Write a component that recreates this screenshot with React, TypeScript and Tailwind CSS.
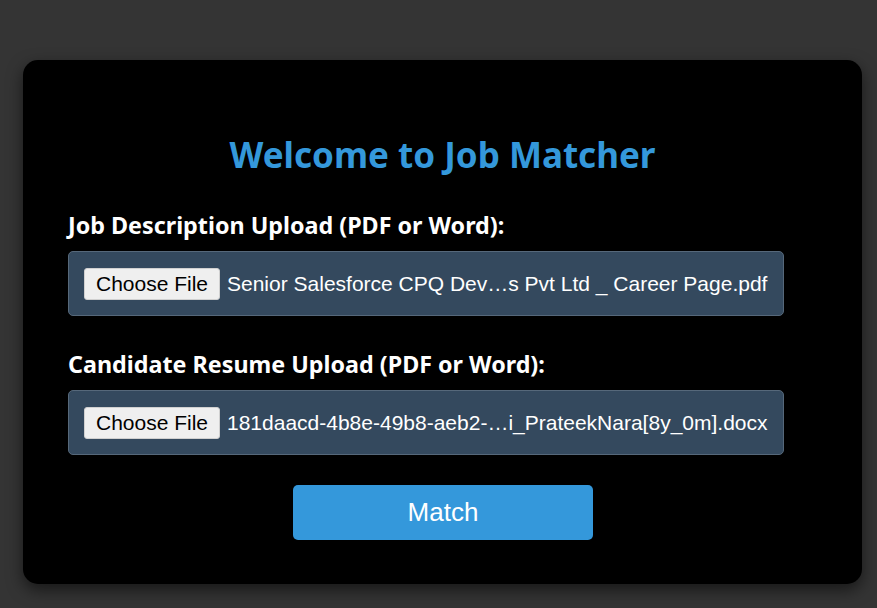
export default function App() {
  const uploads = [
    { label: 'Job Description Upload (PDF or Word):', file: 'Senior Salesforce CPQ Dev…s Pvt Ltd _ Career Page.pdf' },
    { label: 'Candidate Resume Upload (PDF or Word):', file: '181daacd-4b8e-49b8-aeb2-…i_PrateekNara[8y_0m].docx' },
  ];

  return (
    <div className="min-h-screen w-full bg-[#343434] pt-[60px] pl-[23px] font-['Noto_Sans',sans-serif]">
      <div className="w-[839px] h-[524px] bg-black rounded-[15px] shadow-[0_6px_16px_rgba(0,0,0,0.55)] pt-[73px] pl-[45px] flex flex-col">
        <h1 className="w-[749px] text-center text-[35px] leading-[44px] font-bold text-[#3498db]">
          Welcome to Job Matcher
        </h1>

        {uploads.map((u, i) => (
          <div key={i} className={i === 0 ? 'mt-[33px]' : 'mt-[33px]'}>
            <label className="block text-white font-bold text-[23.3px] leading-[30px]">
              {u.label}
            </label>
            <div className="mt-[11px] w-[716px] h-[65px] bg-[#34495e] border border-[#56687a] rounded-[5px] flex items-center pl-[15px] font-['Liberation_Sans',Arial,sans-serif]">
              <span className="h-[32px] w-[136px] flex items-center justify-center bg-[#efefef] border border-[#d0d0d0] rounded-[3px] text-black text-[21px]">
                Choose File
              </span>
              <span className="ml-[7px] text-white text-[21px] whitespace-nowrap">{u.file}</span>
            </div>
          </div>
        ))}

        <button className="mt-[30px] ml-[225px] w-[300px] h-[55px] bg-[#3498db] rounded-[5px] text-white text-[26px] font-['Liberation_Sans',Arial,sans-serif]">
          Match
        </button>
      </div>
    </div>
  );
}
